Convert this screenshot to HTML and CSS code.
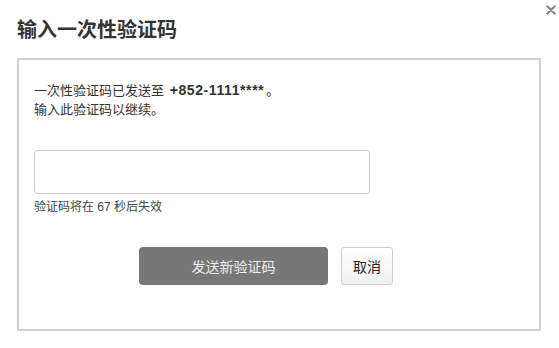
FILE: index.html
```html
<!DOCTYPE html>
<html lang="zh-CN">
<head>
<meta charset="utf-8">
<title>输入一次性验证码</title>
<link rel="stylesheet" href="styles.css">
</head>
<body>
<div class="dialog">
  <div class="header">
    <h1 class="title">输入一次性验证码</h1>
    <span class="close" aria-label="关闭">
      <svg width="10" height="10" viewBox="0 0 10 10"><path d="M1.5 1.5 L8.5 8.5 M8.5 1.5 L1.5 8.5" stroke="#8a8a8a" stroke-width="2.4" stroke-linecap="round"/></svg>
    </span>
  </div>
  <div class="panel">
    <p class="msg">一次性验证码已发送至 <b class="phone">+852-1111****</b>。<br>输入此验证码以继续。</p>
    <input class="code" type="text">
    <p class="hint">验证码将在 67 秒后失效</p>
    <div class="actions">
      <button class="btn btn-primary">发送新验证码</button>
      <button class="btn btn-cancel">取消</button>
    </div>
  </div>
</div>
</body>
</html>
```

FILE: styles.css
```css
html, body {
  margin: 0;
  padding: 0;
  background: #fff;
}
body {
  font-family: "Liberation Sans", "Noto Sans CJK SC", sans-serif;
  color: #333;
}
.dialog {
  position: relative;
  width: 559px;
  height: 348px;
}
.header {
  height: 58px;
  box-sizing: border-box;
  padding: 15px 0 0 17px;
}
.title {
  margin: 0;
  font-size: 20px;
  line-height: 28px;
  font-weight: bold;
  color: #333;
  font-family: "Noto Sans CJK SC", sans-serif;
}
.close {
  position: absolute;
  top: 5px;
  right: 3px;
  width: 10px;
  height: 10px;
  display: block;
}
.close svg {
  display: block;
}
.panel {
  margin-left: 17px;
  width: 524px;
  height: 273px;
  box-sizing: border-box;
  border: 2px solid #d0d0d0;
  padding: 21px 15px 0 15px;
}
.msg {
  margin: 0;
  font-size: 13px;
  line-height: 19px;
  color: #333;
}
.phone {
  font-weight: bold;
  font-size: 14px;
  letter-spacing: 0.6px;
  margin-left: 2px;
  margin-right: 2px;
}
.code {
  display: block;
  margin-top: 31px;
  width: 336px;
  height: 44px;
  box-sizing: border-box;
  border: 1px solid #cfcfcf;
  border-radius: 3px;
  padding: 0 10px;
  font-size: 14px;
  outline: none;
}
.hint {
  margin: 5px 0 0 0;
  font-size: 12px;
  line-height: 16px;
  color: #444;
}
.actions {
  display: flex;
  gap: 13px;
  margin-top: 32px;
  margin-left: 105px;
}
.btn {
  height: 38px;
  box-sizing: border-box;
  font-size: 14px;
  font-family: "Noto Sans CJK SC", sans-serif;
  border-radius: 3px;
  cursor: pointer;
  padding: 0;
}
.btn-primary {
  width: 189px;
  background: #777;
  color: #eee;
  border: none;
  border-radius: 4px;
}
.btn-cancel {
  width: 52px;
  background: linear-gradient(#fff, #f1f1f1);
  border: 1px solid #cfcfcf;
  color: #222;
}
```
